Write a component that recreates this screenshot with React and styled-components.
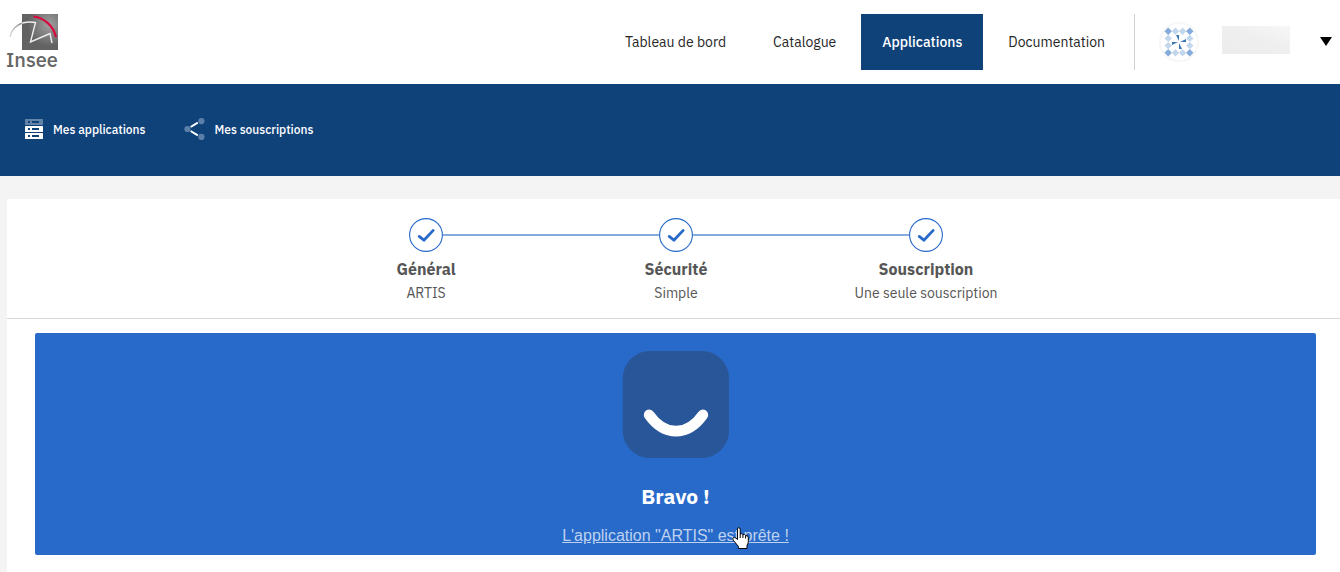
import React from 'react';
import styled, { createGlobalStyle } from 'styled-components';

const NAVY = '#10427a';
const BLUE = '#286aca';

const GlobalStyle = createGlobalStyle`
    * {
        box-sizing: border-box;
    }

    body {
        margin: 0;
        background: #f4f4f4;
        font-family: 'IBM Plex Sans', Roboto, 'Liberation Sans', sans-serif;
    }

    #root {
        min-height: 100vh;
        display: flex;
    }
`;

const Page = styled.div`
    flex: 1;
    min-width: 0;
    display: flex;
    flex-direction: column;
`;

const Header = styled.header`
    display: flex;
    align-items: center;
    justify-content: space-between;
    height: 84px;
    padding: 0 8px 0 6px;
    background: #fff;
`;

const LogoLink = styled.a`
    display: block;
    line-height: 0;
`;

const HeaderRight = styled.div`
    display: flex;
    align-items: center;
`;

const Nav = styled.nav`
    display: flex;
    gap: 3px;
    padding-right: 7px;
`;

const NavLink = styled.a`
    display: flex;
    align-items: center;
    height: 56px;
    padding: 0 ${props => (props.$active ? 21 : 22)}px;
    font-size: 14px;
    font-weight: ${props => (props.$active ? 500 : 400)};
    color: ${props => (props.$active ? '#fff' : '#262626')};
    background: ${props => (props.$active ? NAVY : 'transparent')};
    text-decoration: none;
`;

const UserButton = styled.button`
    display: flex;
    align-items: center;
    height: 56px;
    padding: 0 0 0 24px;
    border: 0;
    border-left: 1px solid #d0d0d0;
    background: none;
    cursor: pointer;
`;

const Avatar = styled.svg`
    width: 40px;
    height: 40px;
    margin-right: 23px;
`;

const UserName = styled.span`
    width: 68px;
    height: 28px;
    margin: 0 30px 4px 0;
    background: linear-gradient(20deg, #ececec, #efefef 55%, #f7f7f7);
`;

const SubNav = styled.nav`
    display: flex;
    align-items: center;
    gap: 39px;
    height: 92px;
    padding: 0 24px 2px;
    background: ${NAVY};
`;

const SubNavLink = styled.a`
    display: flex;
    align-items: center;
    gap: 9px;
    font-size: 12px;
    font-weight: 500;
    color: #fff;
    text-decoration: none;
`;

const Card = styled.main`
    flex: 1;
    margin: 23px 0 0 7px;
    background: #fff;
`;

const Stepper = styled.ol`
    display: flex;
    justify-content: center;
    margin: 0;
    padding: 19px 0 13px 5px;
    border-bottom: 1px solid #d8d8d8;
    list-style: none;
`;

const Step = styled.li`
    width: 250px;
    text-align: center;
    line-height: 24px;
    color: #565656;
`;

const StepTrack = styled.div`
    display: flex;
    align-items: center;
    margin-bottom: 5px;
`;

const StepLine = styled.span`
    flex: 1;
    height: 2px;
    background: ${props => (props.$hidden ? 'transparent' : '#86abe0')};
`;

const StepTitle = styled.div`
    font-size: 16px;
    font-weight: 700;
`;

const StepDetail = styled.div`
    font-size: 14px;
`;

const Banner = styled.section`
    display: flex;
    flex-direction: column;
    align-items: center;
    margin: 14px 24px 17px 28px;
    padding: 18px 0 7px;
    border-radius: 2px;
    color: #fff;
    background: ${BLUE};
`;

const BannerTitle = styled.h1`
    margin: 22px 0 12px;
    font-size: 21px;
    line-height: 32px;
    font-weight: 700;
`;

const BannerLink = styled.a`
    position: relative;
    font-family: 'Liberation Sans', Arial, sans-serif;
    font-size: 16px;
    line-height: 24px;
    color: #bed2ef;
`;

const Pointer = styled.svg`
    position: absolute;
    top: 3px;
    right: 40px;
    pointer-events: none;
`;

const InseeLogo = () => (
    <svg width="60" height="64" viewBox="0 -4 60 64" aria-label="Insee">
        <defs>
            <radialGradient id="logo-bg" cx="0.75" cy="0.3" r="0.6">
                <stop offset="0" stopColor="#a0a0a0" />
                <stop offset="1" stopColor="#626262" />
            </radialGradient>
            <linearGradient id="logo-arc" x1="0" x2="1">
                <stop offset="0" stopColor="#d8d8d8" />
                <stop offset="0.25" stopColor="#8c8c8c" />
                <stop offset="0.32" stopColor="#eee" />
            </linearGradient>
        </defs>
        <rect x="16" width="36" height="36" fill="url(#logo-bg)" />
        <path
            d="M4 23C6 13 15 6 29.5 8.5L24.5 28L44 19.5L46 29"
            fill="none"
            stroke="url(#logo-arc)"
            strokeWidth="1.4"
        />
        <path
            d="M27.5 2.5C38 4 47 11 50 23"
            fill="none"
            stroke="#d8083c"
            strokeWidth="2.2"
        />
        <text
            x="0"
            y="53"
            fontFamily="'IBM Plex Sans', 'Noto Sans', sans-serif"
            fontSize="20"
            fontWeight="500"
            fill="#666"
        >
            Insee
        </text>
    </svg>
);

const DIAMONDS = [0, 1, 2, 3].flatMap(row =>
    [0, 1, 2, 3]
        .filter(col => row % 3 === 0 || col % 3 === 0)
        .map(col => ({ row, col, corner: row % 3 === 0 && col % 3 === 0 }))
);

const Identicon = () => (
    <Avatar viewBox="0 0 40 40" aria-hidden="true">
        <circle cx="20" cy="20" r="19" fill="#fff" stroke="#f7f7f7" strokeWidth="2" />
        {DIAMONDS.map(({ row, col, corner }) => (
            <path
                key={`${row}-${col}`}
                d="M0 -3.7L3.7 0L0 3.7L-3.7 0Z"
                transform={`translate(${9.2 + col * 7.2} ${9.2 + row * 7.2})`}
                fill={corner ? '#84abdb' : '#c2d6ec'}
            />
        ))}
        {[0, 90, 180, 270].map(angle => (
            <path
                key={angle}
                d="M17 13H20V19Z"
                transform={`rotate(${angle} 20 20)`}
                fill="#3a74b5"
            />
        ))}
    </Avatar>
);

const Caret = () => (
    <svg width="12" height="10" viewBox="0 0 12 10" aria-hidden="true">
        <path d="M0 0H12L6 9Z" fill="#000" />
    </svg>
);

const ServerIcon = () => (
    <svg width="20" height="22" viewBox="0 0 20 22" aria-hidden="true">
        {[1, 8, 15].map(y => (
            <g key={y}>
                <rect
                    x="1"
                    y={y}
                    width="18"
                    height="6"
                    rx="0.5"
                    fill="#fff"
                    opacity={y === 1 ? 0.35 : 1}
                />
                <path d={`M4 ${y + 3}H6M8 ${y + 3}H15`} stroke={NAVY} strokeWidth="2" />
            </g>
        ))}
    </svg>
);

const ShareIcon = () => (
    <svg width="21" height="22" viewBox="0 0 21 22" aria-hidden="true">
        <path d="M6.6 9L13.8 4.7M6.6 13L13.8 17.3" stroke="#fff" strokeWidth="2" />
        <g fill="#5c7fa9">
            <circle cx="3.4" cy="11" r="3.1" />
            <circle cx="17.4" cy="3.1" r="3.1" />
            <circle cx="17.4" cy="18.9" r="3.1" />
        </g>
    </svg>
);

const CheckIcon = () => (
    <svg width="34" height="34" viewBox="0 0 34 34" aria-hidden="true">
        <circle cx="17" cy="17" r="16.4" fill="#fff" stroke={BLUE} strokeWidth="1.1" />
        <path
            d="M10.2 18.4L14.9 22.2L24.2 12.4"
            fill="none"
            stroke={BLUE}
            strokeWidth="2.8"
            strokeLinecap="round"
            strokeLinejoin="round"
        />
    </svg>
);

const Smile = () => (
    <svg width="107" height="107" viewBox="0 0 107 107" aria-hidden="true">
        <rect x="0.8" width="106.2" height="107" rx="27" fill="#285698" />
        <path
            d="M27.2 64C42.5 85.6 65.5 85.6 80.8 64"
            fill="none"
            stroke="#fff"
            strokeWidth="10.8"
            strokeLinecap="round"
        />
    </svg>
);

const HandPointer = () => (
    <Pointer width="17" height="23" viewBox="0 0 17 23" aria-hidden="true">
        <path
            d="M5.5 12.5V2.2Q5.5 0.6 6.8 0.6T8.2 2.2V7Q10.2 6 10.9 7.7Q12.9 6.8 13.6 8.6Q16.3 8.2 16.3 10.5V14.5Q16.3 16.5 15 18.3V21.5H6.3V19.3L1.4 13.4Q0.2 11.6 1.3 10.7Q2.6 9.9 4 11.2Z"
            fill="#fff"
            stroke="#000"
            strokeLinejoin="round"
        />
        <path d="M8.2 7V11M10.9 7.7V11M13.6 8.6V11.5" stroke="#000" />
    </Pointer>
);

const NAV = ['Tableau de bord', 'Catalogue', 'Applications', 'Documentation'];

const STEPS = [
    { title: 'Général', detail: 'ARTIS' },
    { title: 'Sécurité', detail: 'Simple' },
    { title: 'Souscription', detail: 'Une seule souscription' }
];

const App = () => (
    <Page>
        <GlobalStyle />
        <Header>
            <LogoLink href="#">
                <InseeLogo />
            </LogoLink>
            <HeaderRight>
                <Nav>
                    {NAV.map(label => (
                        <NavLink key={label} href="#" $active={label === 'Applications'}>
                            {label}
                        </NavLink>
                    ))}
                </Nav>
                <UserButton type="button" aria-label="Menu utilisateur">
                    <Identicon />
                    <UserName />
                    <Caret />
                </UserButton>
            </HeaderRight>
        </Header>
        <SubNav>
            <SubNavLink href="#">
                <ServerIcon />
                Mes applications
            </SubNavLink>
            <SubNavLink href="#">
                <ShareIcon />
                Mes souscriptions
            </SubNavLink>
        </SubNav>
        <Card>
            <Stepper>
                {STEPS.map(({ title, detail }, index) => (
                    <Step key={title}>
                        <StepTrack>
                            <StepLine $hidden={index === 0} />
                            <CheckIcon />
                            <StepLine $hidden={index === STEPS.length - 1} />
                        </StepTrack>
                        <StepTitle>{title}</StepTitle>
                        <StepDetail>{detail}</StepDetail>
                    </Step>
                ))}
            </Stepper>
            <Banner>
                <Smile />
                <BannerTitle>Bravo !</BannerTitle>
                <BannerLink href="#">
                    L'application "ARTIS" est prête !
                    <HandPointer />
                </BannerLink>
            </Banner>
        </Card>
    </Page>
);

export default App;
